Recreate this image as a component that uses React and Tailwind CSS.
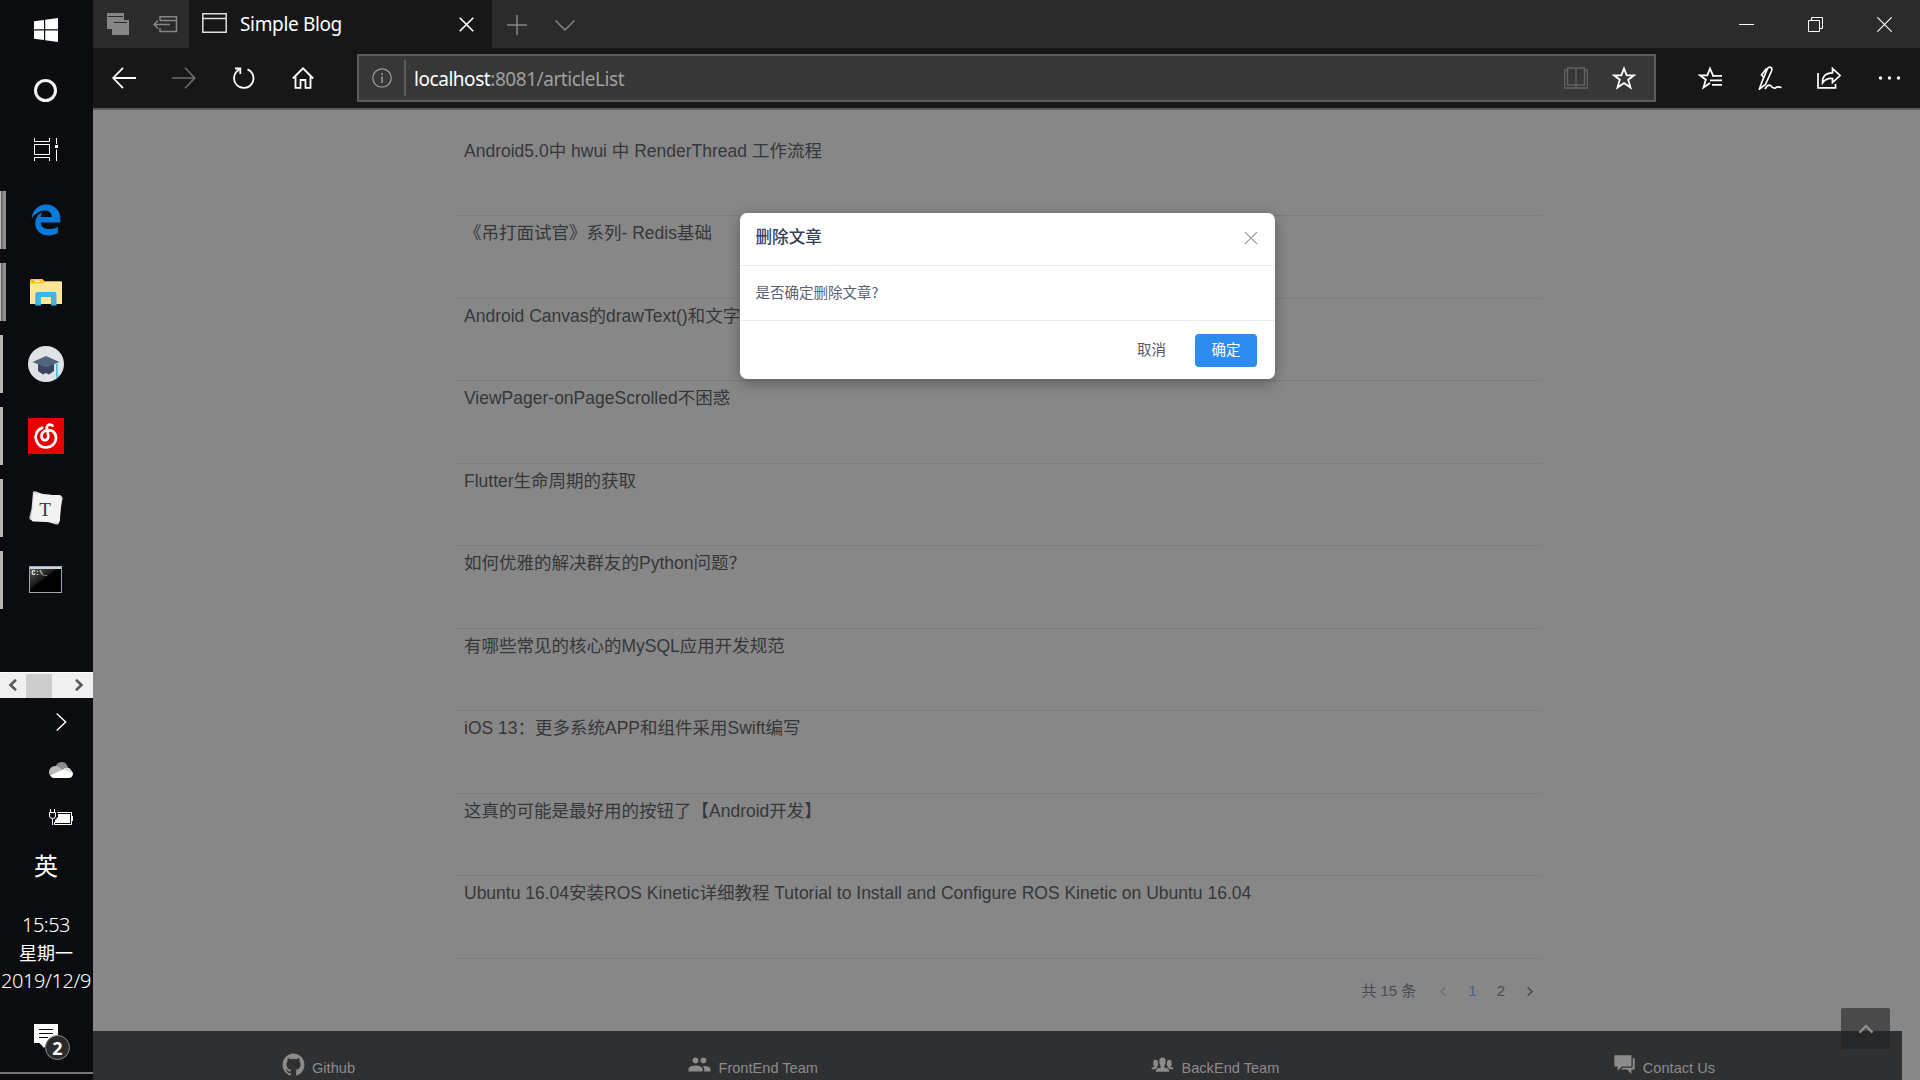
import React from "react";
import { IoMdPeople, IoIosPeople, IoMdChatboxes, IoLogoGithub } from "react-icons/io";
import { FaEdgeLegacy } from "react-icons/fa6";

const ARTICLES = [
  "Android5.0中 hwui 中 RenderThread 工作流程",
  "《吊打面试官》系列- Redis基础",
  "Android Canvas的drawText()和文字居中",
  "ViewPager-onPageScrolled不困惑",
  "Flutter生命周期的获取",
  "如何优雅的解决群友的Python问题？",
  "有哪些常见的核心的MySQL应用开发规范",
  "iOS 13：更多系统APP和组件采用Swift编写",
  "这真的可能是最好用的按钮了【Android开发】",
  "Ubuntu 16.04安装ROS Kinetic详细教程 Tutorial to Install and Configure ROS Kinetic on Ubuntu 16.04",
];

function Svg({ w, h, sw = 1.5, className = "", children }) {
  return (
    <svg width={w} height={h} viewBox={`0 0 ${w} ${h}`} fill="none" stroke="currentColor" strokeWidth={sw} className={"block shrink-0 " + className}>
      {children}
    </svg>
  );
}

/* ---------- taskbar ---------- */

function AppSlot({ bar, children }) {
  return (
    <div className="flex h-[72px] items-center">
      <div className="flex h-[58px] w-[6px] shrink-0">
        <div className="w-[3px] bg-[#b7b8b3]" />
        {bar === "double" && (
          <>
            <div className="-ml-[2px] w-[2px] bg-[#6f706d]" />
            <div className="w-[3px] bg-[#90918d]" />
          </>
        )}
      </div>
      <div className="flex w-[80px] justify-center">{children}</div>
    </div>
  );
}

function Taskbar() {
  return (
    <aside className="flex h-[1080px] w-[93px] shrink-0 flex-col overflow-hidden bg-[#0b0c0f] text-white">
      <div className="flex h-[60px] items-center pl-[34px]">
        <Svg w={24} h={24}>
          <path stroke="none" fill="#fff" d="M0 3.3 10 1.9V11.3H0ZM11.2 1.7 24 0V11.3H11.2ZM0 12.6H10V22L0 20.7ZM11.2 12.6H24V24L11.2 22.3Z" />
        </Svg>
      </div>
      <div className="flex h-[60px] items-center pl-[34px]">
        <div className="h-[23px] w-[23px] rounded-full border-[3px] border-[#f4f4f4]" />
      </div>
      <div className="flex h-[60px] items-center pl-[34px]">
        <Svg w={24} h={24} sw={1}>
          <path d="M.5 0V3.500H15.500V0M.5 6.500H15.500V16.500H.5ZM.5 23V19.500H15.500V23M22.500 0V6M22.500 11.500V23" />
          <path stroke="none" fill="#fff" d="M21 7h3v3h-3z" />
        </Svg>
      </div>
      <div className="mt-1 flex flex-col">
        <AppSlot bar="double">
          <FaEdgeLegacy className="h-[32px] w-[32px] text-[#0a7ad8]" />
        </AppSlot>
        <AppSlot bar="double">
          <Svg w={32} h={27}>
            <g stroke="none">
              <path fill="#f7c33c" d="M0 1.5Q0 0 1.5 0H12.5L15 2.5H31V8H0Z" />
              <path fill="#fff" d="M4 1.7h6v1.3H4z" />
              <path fill="#7fb77e" d="M2.5 1.7h2v1.3h-2z" />
              <path fill="#ffe596" d="M0 4.6H13L15.5 2.6H32V25H0Z" />
              <path fill="#3cb5e9" d="M5.3 15Q5.3 13 7.3 13H24.5Q26.5 13 26.5 15V26.5H21V18H11V26.5H5.3Z" />
            </g>
          </Svg>
        </AppSlot>
        <AppSlot>
          <Svg w={36} h={36}>
            <g stroke="none">
              <circle cx="18" cy="18" r="18" fill="#dfe3e6" />
              <path fill="#3b4560" d="M10 17H26V25L21 28.5 18 27 15 28.5 10 25Z" />
              <path fill="#4f667e" d="M18 10 31.5 16 18 21.5 4.5 16Z" />
              <path fill="#45c4ec" d="M28 18h1.8v13.5L28 33z" />
            </g>
          </Svg>
        </AppSlot>
        <AppSlot>
          <Svg w={36} h={36} sw={2.7}>
            <path stroke="none" fill="#e60000" d="M0 0H36V36H0Z" />
            <path
              stroke="#fff"
              strokeLinecap="round"
              d="M14.200 9.700C8.500 12 6.500 17.500 8.300 22.500C10 27 14 29.700 18.500 29.400C24 29 28 25 28 20C28 14.500 24 11.800 19.500 12.200C15 12.700 13 16 13.500 19C14 21.700 16.500 22.700 18.500 21.700C21 20.500 20.600 18 19.800 15L18.900 11C18.300 7.500 20.500 6.300 22.500 6.700Q23.700 7 24.500 7.800"
            />
          </Svg>
        </AppSlot>
        <AppSlot>
          <Svg w={34} h={34}>
            <path stroke="none" fill="#d6d6d6" d="M4 1Q5 0 7 .5L14 3 32 5Q34 5.500 33.500 8L32 16 30 32Q29.500 34 27 33.500L19 31 2 29Q0 28.500 .500 26L2.500 18Z" />
            <path stroke="none" fill="#f2f2f2" d="M5 2Q15 4 31 4Q32.500 4.500 32 7L31 29Q31 31 29 31.500L4 30.500Q2 30 2.500 28Z" />
            <text x="16" y="24.500" textAnchor="middle" stroke="none" fill="#333" fontSize="19" className="font-['Liberation_Serif',serif]">T</text>
          </Svg>
        </AppSlot>
        <AppSlot>
          <div className="-mt-[2px] -ml-[2px] flex h-[27px] w-[33px] flex-col border border-[#9fa8b0] bg-black">
            <div className="h-[2px] bg-[#cdd6df]" />
            <div className="flex-1 bg-gradient-to-br from-[#5a5a5a] via-[#1c1c1c] via-40% to-black to-50% pl-[2px] font-['Liberation_Mono',monospace] text-[6.500px] leading-[10px] font-bold text-white">
              C:\_
            </div>
          </div>
        </AppSlot>
      </div>

      <div className="mt-[56px] flex h-[26px] shrink-0 items-center border-t border-white bg-[#f0f0f0] text-[#5a5a5a]">
        <div className="-mt-[1px] w-[26px] pl-[8px]">
          <Svg w={9} h={12} sw={2.6}><path d="M8 .8 2.500 6 8 11.200" /></Svg>
        </div>
        <div className="h-[24px] w-[26px] bg-[#cdcdcd]" />
        <div className="-mt-[1px] ml-[23px]">
          <Svg w={9} h={12} sw={2.6}><path d="M1 .8 6.500 6 1 11.200" /></Svg>
        </div>
      </div>

      <div className="flex flex-col pl-[49px]">
        <div className="flex h-[48px] items-center pl-[7px]">
          <Svg w={11} h={18} sw={1.4}><path d="M.7.5 9.700 9 .7 17.500" /></Svg>
        </div>
        <div className="flex h-[48px] items-center">
          <Svg w={24} h={16}>
            <g stroke="none">
              <path fill="#8b8b8b" d="M6 7Q7 0 13 0Q18 .3 19 6L12 12Z" />
              <path fill="#b9b9b9" d="M5 15.500Q0 15 0 10Q.5 4.500 6 4Q10 4 13 7.500L17 9Z" />
              <path fill="#fff" d="M1.500 13.500 14 7.500Q17 4.500 20.500 6.500Q22 7.500 22.500 9Q24 10 24 12Q23.500 16 19.500 16H5Q2.500 16 1.500 13.500Z" />
              <path fill="#dcdcdc" d="M14 7.500Q17 4.500 20.500 6.500Q22 7.500 22.500 9L24 11.500Z" />
            </g>
          </Svg>
        </div>
        <div className="flex h-[46px] items-center">
          <Svg w={24} h={16} sw={1}>
            <path d="M8.500 3.500H22.500V15.500H5.500V13M1.500 0V3M5.500 0V3M.5 3.500H6.500V7Q6.500 9.500 3.500 9.500Q.5 9.500 .5 7ZM3.500 9.500V16" />
            <path stroke="none" fill="#fff" d="M9 5H21V14H6V11L9 8ZM23 7h1v5h-1z" />
          </Svg>
        </div>
      </div>
      <div className="mt-[7px] h-[36px] pr-[1px] text-center font-['Noto_Sans_CJK_SC',sans-serif] text-[24px] leading-[36px]">英</div>

      <div className="mt-[28px] flex flex-col items-center pr-[1px] font-['Noto_Sans','Noto_Sans_CJK_SC',sans-serif] text-[20px] leading-[28px] font-light whitespace-nowrap">
        <div className="tracking-[-0.550px]">15:53</div>
        <div className="text-[18px] font-normal">星期一</div>
        <div className="tracking-[-0.400px]">2019/12/9</div>
      </div>

      <div className="relative mt-[29px] ml-[34px] h-[36px] w-[36px]">
        <Svg w={24} h={25}>
          <path stroke="none" fill="#fff" d="M0 0H24V19H13L10 24 5.500 19H0Z" />
          <path stroke="#0b0c0f" strokeWidth="1.200" d="M5 5.500H19M5 9.500H19M5 13.500H14" />
        </Svg>
        <div className="absolute top-[11px] left-[11px] flex h-[25px] w-[25px] items-center justify-center rounded-full border border-[#8a8a8a] bg-[#2a2a2a] font-['Noto_Sans',sans-serif] text-[18px] leading-none font-bold">
          2
        </div>
      </div>
      <div className="mt-auto mb-[6px] h-[2px] shrink-0 bg-[#77777a]" />
    </aside>
  );
}

/* ---------- browser chrome ---------- */

function TabStrip() {
  return (
    <div className="flex h-[48px] items-center bg-[#2b2b2b] text-[#868686]">
      <div className="ml-[14px]">
        <Svg w={22} h={22}>
          <g stroke="none" fill="currentColor">
            <path d="M0 0H17V16H0Z" />
            <path stroke="#2b2b2b" strokeWidth="1" d="M1 3.500H16" />
            <path d="M5 7H22V22H5Z" />
            <path stroke="#2b2b2b" strokeWidth="1" d="M7 9.500H20" />
          </g>
        </Svg>
      </div>
      <div className="ml-[24px]">
        <Svg w={25} h={17}>
          <path d="M7 4.500V.8H23.500V15.500H7V12M7 4.500H23.500M1 8.500H17M5 4.500 1 8.500 5 12.500" />
        </Svg>
      </div>
      <div className="ml-[11px] flex h-full w-[303px] items-center bg-[#171717] text-white">
        <div className="-mt-[2px] ml-[13px] text-[#dedede]">
          <Svg w={25} h={20}><path d="M.8.8H24.200V19.200H.8ZM.8 5.500H24.200" /></Svg>
        </div>
        <div className="ml-[13px] w-[220px] font-['Noto_Sans',sans-serif] text-[19px] leading-[48px] tracking-[-0.350px]">Simple Blog</div>
        <Svg w={15} h={15} sw={1.6} className="-ml-[1px]"><path d="M.7.7 14.300 14.300M14.300.7.7 14.300" /></Svg>
      </div>
      <Svg w={20} h={20} className="mt-[2px] ml-[15px]"><path d="M10 0V20M0 10H20" /></Svg>
      <Svg w={20} h={11} className="mt-[2px] ml-[28px]"><path d="M.5.5 10 10 19.500.5" /></Svg>
      <div className="ml-auto flex items-center pr-[28px] text-white">
        <Svg w={15} h={15} sw={1}><path d="M0 7.500H15" /></Svg>
        <Svg w={15} h={15} sw={1} className="ml-[54px]"><path d="M.5 3.500H11.500V14.500H.5ZM3.500 3.500V.5H14.500V11.500H11.500" /></Svg>
        <Svg w={15} h={15} sw={1.1} className="ml-[54px]"><path d="M.3.3 14.700 14.700M14.700.3.3 14.700" /></Svg>
      </div>
    </div>
  );
}

function Toolbar() {
  return (
    <div className="flex h-[62px] items-center border-b-2 border-[#5b5b5b] bg-[#171717] pl-[19px] text-white">
      <Svg w={24} h={22} sw={1.8}><path d="M1.200 11H24M11 .8 1.200 11 11 21.200" /></Svg>
      <Svg w={24} h={22} sw={1.6} className="ml-[36px] text-[#6e6e6e]"><path d="M0 11H22.800M13 .8 22.800 11 13 21.200" /></Svg>
      <Svg w={22} h={22} sw={1.8} className="ml-[37px]"><path d="M14.500 2.300A9.700 9.700 0 1 1 6 2.800M2 1.500H7.300V7" /></Svg>
      <Svg w={22} h={22} sw={1.8} className="ml-[37px]"><path d="M.8 11.500 11 1.300 21.200 11.500M3.500 9.500V20.800H8.500V13H13.500V20.800H18.500V9.500" /></Svg>
      <div className="ml-[43px] flex h-[48px] w-[1299px] items-center border-2 border-[#5c5c5c] bg-[#373737]">
        <Svg w={20} h={20} sw={1.3} className="ml-[13px] text-[#989898]"><circle cx="10" cy="10" r="9.200" /><path strokeWidth="1.600" d="M10 8.500V15M10 5V6.800" /></Svg>
        <div className="ml-[12px] h-[36px] w-[2px] bg-[#5c5c5c]" />
        <div className="mt-[2px] ml-[8px] font-['Noto_Sans',sans-serif] text-[19px] leading-[44px] tracking-[-0.450px] text-[#a0a0a0]">
          <span className="text-white">localhost</span>:8081/articleList
        </div>
        <div className="ml-auto flex items-center pr-[18px]">
          <Svg w={24} h={22} sw={1.3} className="text-[#636363]"><path d="M3.500 1H10Q12 1 12 3Q12 1 14 1H20.500V18H14Q12 18 12 20Q12 18 10 18H3.500ZM12 3V20M3.500 3H.7V21H23.300V3H20.500" /></Svg>
          <Svg w={24} h={24} sw={1.8} className="ml-[24px]"><path d="M12 2.500 14.700 9.300H22L16.200 13.700 18.500 21.500 12 17 5.500 21.500 7.800 13.700 2 9.300H9.300Z" /></Svg>
        </div>
      </div>
      <Svg w={24} h={24} sw={1.8} className="ml-[42px]"><path d="M15 9.300 12 2.500 9.300 9.300H2L7.800 13.700 5.500 21.500 12 17M14 9.800H24M12 14.300H24M14 18.800H24" /></Svg>
      <Svg w={24} h={24} sw={1.7} className="ml-[36px]"><path d="M3.500 17 9.500 2.500Q11 .5 13 1.500Q14.500 2.500 13.500 5L7.500 18.500 1.500 23ZM1.500 23 3.500 17M5.500 11 3.500 9 8.500 2.500M7 23Q10 18 12.500 19.500Q15 23 17.500 22Q19 20 23.500 21.500" /></Svg>
      <Svg w={24} h={22} sw={1.7} className="ml-[35px]"><path d="M1 6V20.800H18.500V17M5.500 16Q5 6 15.500 5.800V1.500L23 8.500 15.500 15.500V11.500Q9 11 5.500 16Z" /></Svg>
      <Svg w={24} h={6} className="ml-[37px]"><g stroke="none" fill="#fff"><circle cx="2.500" cy="3" r="1.700" /><circle cx="11.500" cy="3" r="1.700" /><circle cx="20.500" cy="3" r="1.700" /></g></Svg>
    </div>
  );
}

/* ---------- page ---------- */

function FooterItem({ icon, label }) {
  return (
    <div className="flex items-end gap-[6px]">
      {icon}
      <span className="leading-[16px]">{label}</span>
    </div>
  );
}

function ConfirmDialog() {
  return (
    <div className="absolute top-[103px] left-[646.500px] flex h-[166px] w-[535.500px] flex-col rounded-[7px] bg-white font-['Noto_Sans_CJK_SC',sans-serif] shadow-[0_4px_14px_rgba(0,0,0,0.3)]">
      <div className="flex h-[53px] items-center justify-between border-b border-[#e8eaec] pr-[17px] pl-[16px]">
        <span className="-mt-[5px] text-[16.600px] leading-none font-medium text-[#37415a]">删除文章</span>
        <Svg w={14} h={14} sw={1.2} className="-mt-[2px] text-[#999]"><path d="M.8.8 13.200 13.200M13.200.8.8 13.200" /></Svg>
      </div>
      <div className="flex h-[55px] items-center border-b border-[#e8eaec] pb-[2px] pl-[16px] text-[14.500px] leading-none text-[#5a6276]">是否确定删除文章?</div>
      <div className="flex flex-1 items-center justify-end pr-[18px] text-[14.500px] leading-none">
        <button className="mr-[29px] pb-[1px] text-[#515a6e]">取消</button>
        <button className="h-[33px] w-[62px] rounded-[4px] bg-[#2d8cf0] pb-[1px] text-white">确定</button>
      </div>
    </div>
  );
}

function Page() {
  return (
    <div className="relative flex h-[970px] flex-col overflow-hidden bg-[#878787] font-['Liberation_Sans','Noto_Sans_CJK_SC',sans-serif]">
      <div className="ml-[361px] flex w-[1088px] flex-col pt-[23.500px]">
        {ARTICLES.map((t) => (
          <div key={t} className="h-[82.500px] border-b border-[#7d7d7d] pt-[4px] pl-[10px] text-[17.500px] leading-[26px] whitespace-nowrap text-[#35373a]">
            {t}
          </div>
        ))}
        <div className="mt-[19px] flex h-[28px] items-center justify-end pr-[9px] text-[15px] text-[#474b53]">
          <span>共 15 条</span>
          <Svg w={6} h={9} sw={1.5} className="ml-[24px] text-[#6c6c6c]"><path d="M5.300.5 1 4.500 5.300 8.500" /></Svg>
          <span className="ml-[22px] text-[#46628f]">1</span>
          <span className="ml-[20px]">2</span>
          <Svg w={6} h={9} sw={1.6} className="ml-[22px]"><path d="M.7.5 5 4.500.7 8.500" /></Svg>
        </div>
      </div>
      <footer className="mt-auto mr-[18px] flex h-[49px] shrink-0 items-start justify-between bg-[#2f3032] pt-[21px] pr-[187px] pl-[188px] text-[14.600px] text-[#8c8c8c]">
        <FooterItem label="Github" icon={<IoLogoGithub className="-mb-[1px] h-[25px] w-[25px]" />} />
        <FooterItem label="FrontEnd Team" icon={<IoMdPeople className="-mb-[1px] h-[25px] w-[25px]" />} />
        <FooterItem label="BackEnd Team" icon={<IoIosPeople className="-mb-[1px] h-[25px] w-[25px]" />} />
        <FooterItem label="Contact Us" icon={<IoMdChatboxes className="-mb-[1px] h-[25px] w-[25px]" />} />
      </footer>
      <div className="absolute right-[30px] bottom-[31px] flex h-[41px] w-[49px] items-center justify-center rounded-[2px] bg-[#212121]/60 text-[#8c8c8c]">
        <Svg w={16} h={10} sw={2.4}><path d="M1.500 8.700 8 2 14.500 8.700" /></Svg>
      </div>
      <ConfirmDialog />
    </div>
  );
}

export default function App() {
  return (
    <div className="flex h-[1080px] w-[1920px] overflow-hidden">
      <Taskbar />
      <main className="flex min-w-0 flex-1 flex-col">
        <TabStrip />
        <Toolbar />
        <Page />
      </main>
    </div>
  );
}
